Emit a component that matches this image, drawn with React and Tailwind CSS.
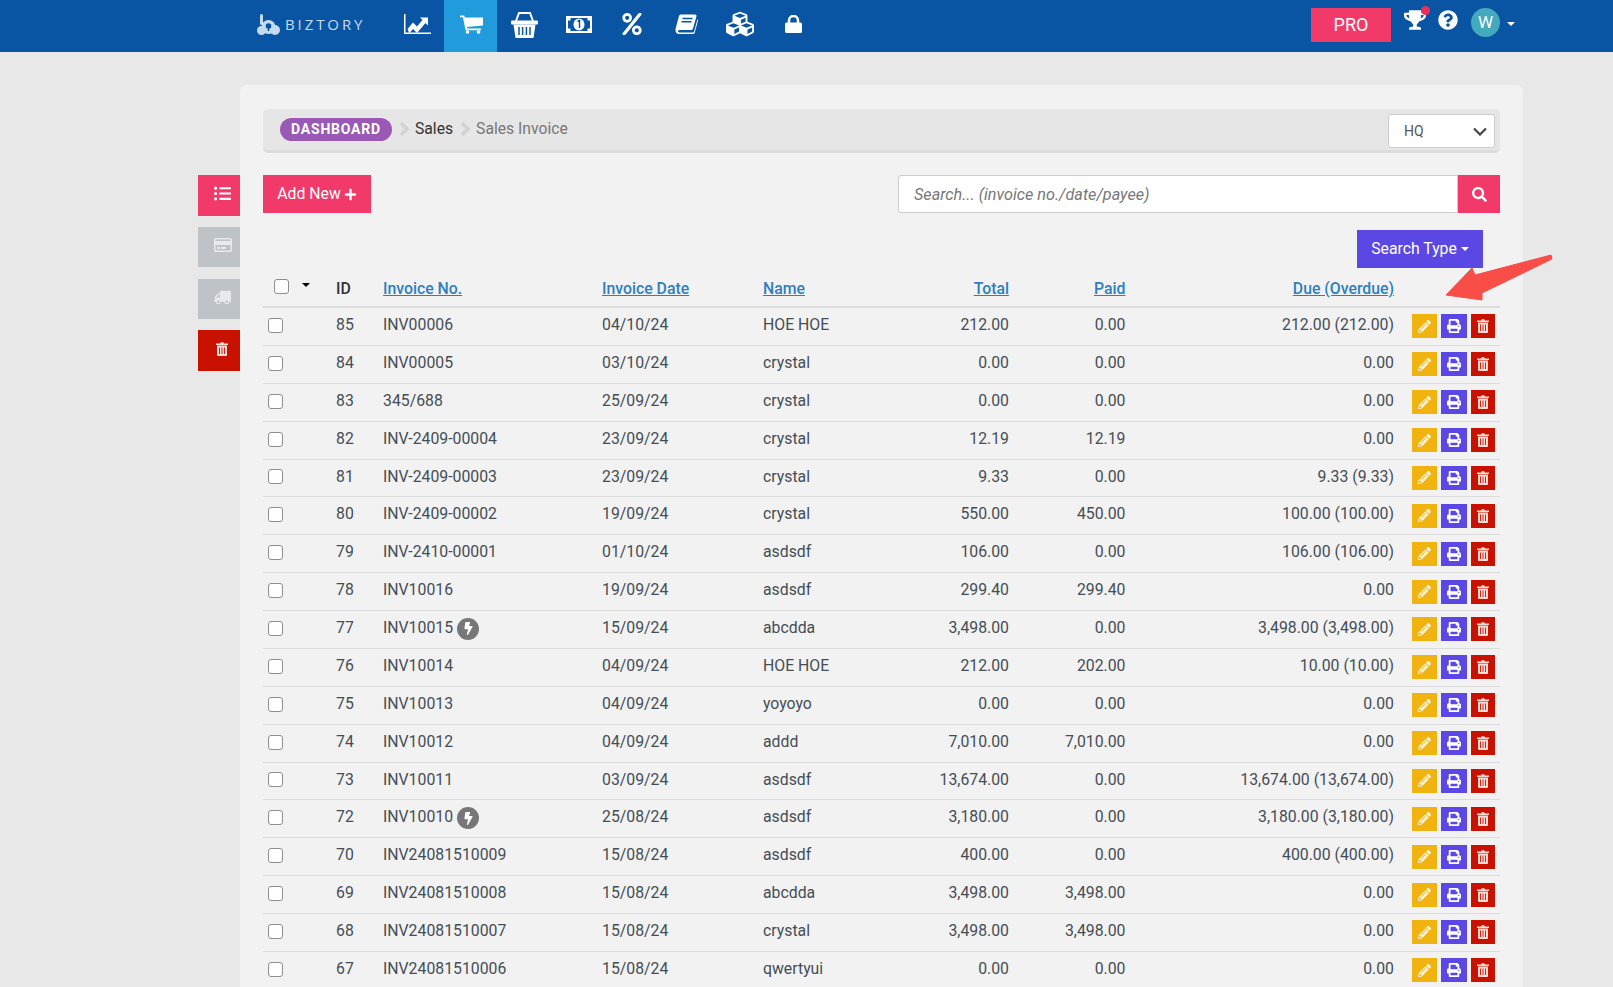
import React from 'react';
import {
  FaBolt, FaCubes, FaListUl, FaPencilAlt, FaPercent, FaPlus, FaPrint,
  FaQuestionCircle, FaRegCreditCard, FaSearch, FaTrophy, FaTruck,
} from 'react-icons/fa';

const ChartIcon = () => (
  <svg width="27" height="20" viewBox="0 0 27 20" fill="white">
    <path d="M.75 0v19.250H27" fill="none" stroke="white" strokeWidth="1.500" />
    <path d="M3.500 15l5.500-6.500 4 4 5.500-6.500-2.500-2.500h8v8l-2.500-2.500-8.500 10-4-4-3.700 4.300z" />
  </svg>
);

const CartIcon = () => (
  <svg width="23" height="19" viewBox="0 0 23 19" fill="white">
    <path d="M0 .5h4.200l.6 2H23v8L7 12l.3 1.500H21v1.700H5.500L3 2.200H0z" />
    <circle cx="7.500" cy="17" r="1.800" />
    <circle cx="18.500" cy="17" r="1.800" />
  </svg>
);

const BasketIcon = () => (
  <svg width="27" height="27" viewBox="0 0 27 27" fill="white">
    <path d="M5 10 8 2h11l3 8" fill="none" stroke="white" strokeWidth="2" />
    <rect y="9.500" width="27" height="4" rx="1" />
    <path d="M2.500 13.500h22L22.500 27h-18z" />
    <path d="M8 16v8M11.600 16v8M15.400 16v8M19 16v8" stroke="#0a55a3" strokeWidth="1.500" />
  </svg>
);

const MoneyIcon = () => (
  <svg width="26" height="17" viewBox="0 0 26 17" fill="white">
    <rect width="26" height="17" />
    <path d="M4.500 2h17v2.500H24v8h-2.500V15h-17v-2.500H2v-8h2.500z" fill="#0a55a3" />
    <ellipse cx="13" cy="8.500" rx="5.500" ry="6" />
    <path d="M11.500 5.500 13.500 4.500v7.500" fill="none" stroke="#0a55a3" strokeWidth="1.500" />
  </svg>
);

const BookIcon = () => (
  <svg width="23" height="20" viewBox="0 0 23 20" fill="white">
    <path d="M5.500.5h14.500q2 0 1.400 2L18 14.500q-.4 1.500-1.800 1.500H4.800q-2.300 0-1.900 1.500.3 1 2 1h12.600q1.300 0 1.700-1.200L22.500 5l.5 1.500-3.200 12q-.4 1.500-2 1.500H4.200Q1 20 .5 16.500q-.2-1.500.5-3.500L4 2Q4.400.5 5.500.5z" />
    <path d="M7.500 4.500h10M6.500 7.800h10" stroke="#0a55a3" strokeWidth="1.600" />
  </svg>
);

const LockIcon = () => (
  <svg width="17" height="18" viewBox="0 0 17 18" fill="white">
    <path d="M4 8V5.500a4.500 4.500 0 0 1 9 0V8" fill="none" stroke="white" strokeWidth="2.500" />
    <rect y="7.500" width="17" height="10.500" rx="1.500" />
  </svg>
);

const TrashIcon = () => (
  <svg width="12" height="14" viewBox="0 0 12 14" fill="#f9dcd6">
    <path d="M4 1.600 4.700.3h2.600L8 1.600h4V3H0V1.600z" />
    <path d="M1 3.600h10V13q0 1-1 1H2q-1 0-1-1z" />
    <path d="M3.500 5.500v6.500M6 5.500v6.500M8.500 5.500v6.500" stroke="#c91100" strokeWidth=".9" />
  </svg>
);

const navIcons = [
  { icon: <ChartIcon /> },
  { icon: <CartIcon />, active: true },
  { icon: <BasketIcon /> },
  { icon: <MoneyIcon /> },
  { icon: <FaPercent size={22} /> },
  { icon: <BookIcon /> },
  { icon: <FaCubes size={28} /> },
  { icon: <LockIcon /> },
];

const rows = [
  ['85', 'INV00006', '04/10/24', 'HOE HOE', '212.00', '0.00', '212.00 (212.00)'],
  ['84', 'INV00005', '03/10/24', 'crystal', '0.00', '0.00', '0.00'],
  ['83', '345/688', '25/09/24', 'crystal', '0.00', '0.00', '0.00'],
  ['82', 'INV-2409-00004', '23/09/24', 'crystal', '12.19', '12.19', '0.00'],
  ['81', 'INV-2409-00003', '23/09/24', 'crystal', '9.33', '0.00', '9.33 (9.33)'],
  ['80', 'INV-2409-00002', '19/09/24', 'crystal', '550.00', '450.00', '100.00 (100.00)'],
  ['79', 'INV-2410-00001', '01/10/24', 'asdsdf', '106.00', '0.00', '106.00 (106.00)'],
  ['78', 'INV10016', '19/09/24', 'asdsdf', '299.40', '299.40', '0.00'],
  ['77', 'INV10015', '15/09/24', 'abcdda', '3,498.00', '0.00', '3,498.00 (3,498.00)', true],
  ['76', 'INV10014', '04/09/24', 'HOE HOE', '212.00', '202.00', '10.00 (10.00)'],
  ['75', 'INV10013', '04/09/24', 'yoyoyo', '0.00', '0.00', '0.00'],
  ['74', 'INV10012', '04/09/24', 'addd', '7,010.00', '7,010.00', '0.00'],
  ['73', 'INV10011', '03/09/24', 'asdsdf', '13,674.00', '0.00', '13,674.00 (13,674.00)'],
  ['72', 'INV10010', '25/08/24', 'asdsdf', '3,180.00', '0.00', '3,180.00 (3,180.00)', true],
  ['70', 'INV24081510009', '15/08/24', 'asdsdf', '400.00', '0.00', '400.00 (400.00)'],
  ['69', 'INV24081510008', '15/08/24', 'abcdda', '3,498.00', '3,498.00', '0.00'],
  ['68', 'INV24081510007', '15/08/24', 'crystal', '3,498.00', '3,498.00', '0.00'],
  ['67', 'INV24081510006', '15/08/24', 'qwertyui', '0.00', '0.00', '0.00'],
];

const gridCols = 'grid grid-cols-[73px_47px_219px_161px_137px_109px_116.5px_268.5px_106px] items-center';

const Check = () => (
  <input type="checkbox" className="appearance-none block w-[15px] h-[15px] bg-white border border-[#8f8f8f] rounded-[3px]" />
);

const Logo = () => (
  <svg width="23" height="21" viewBox="0 0 23 21" fill="#c4dcee">
    <rect x="3" width="3" height="11" rx="1.500" />
    <circle cx="11.500" cy="13" r="7" />
    <circle cx="4.500" cy="16.500" r="4.500" />
    <circle cx="18" cy="16" r="5" />
    <circle cx="11.500" cy="12" r="2.800" fill="#0a55a3" />
    <rect x="10.700" y="12" width="1.600" height="5" fill="#0a55a3" />
  </svg>
);

const App = () => (
  <div className="h-[987px] overflow-hidden bg-[#e8e8e8] font-['Roboto',sans-serif] text-[15.8px] text-[#454d55]">
    <header className="h-[52px] bg-[#0a55a3] flex items-center relative">
      <div className="ml-[257px] w-[133px] flex items-center gap-[5px] pb-[3px]">
        <Logo />
        <span className="font-['Open_Sans',sans-serif] text-[15px] tracking-[2.900px] text-[#c4dcee]">BIZTORY</span>
      </div>
      <nav className="flex h-full">
        {navIcons.map(({ icon, active }, i) => (
          <div key={i} className={`w-[53.700px] h-full flex items-center justify-center text-white pl-[1.500px] pb-[4px] ${active ? 'bg-[#219bdb]' : ''}`}>
            {icon}
          </div>
        ))}
      </nav>
      <div className="ml-auto mr-[98px] flex items-start h-full">
        <div className="mt-[8px] w-[80px] h-[34px] bg-[#f13a6a] text-white text-[18px] flex items-center justify-center pb-[1px]">PRO</div>
        <div className="relative ml-[13px] mt-[9px] text-white">
          <FaTrophy size={22} />
          <span className="absolute -top-[3px] right-[-4px] w-[9px] h-[9px] rounded-full bg-[#e8305f]" />
        </div>
        <FaQuestionCircle size={20} className="ml-[12px] mt-[10px] text-white" />
        <div className="ml-[13px] mt-[8px] w-[29px] h-[29px] rounded-full bg-[#43a9bd] text-white text-[17px] flex items-center justify-center">W</div>
        <span className="ml-[7px] mt-[22px] w-0 h-0 border-x-[4px] border-x-transparent border-t-[4px] border-t-white" />
      </div>
    </header>

    <div className="flex pl-[198px]">
      <aside className="mt-[123px] w-[42px] flex flex-col text-[#e6eaec]">
        <div className="h-[41px] bg-[#f13a6a] text-white flex items-center justify-center pl-[7px] pb-[4px]"><FaListUl size={17} /></div>
        <div className="mt-[11px] h-[40px] bg-[#bec3c7] flex items-center justify-center pl-[7px] pb-[4px]"><FaRegCreditCard size={18} /></div>
        <div className="mt-[12px] h-[40px] bg-[#bec3c7] flex items-center justify-center pl-[7px] pb-[4px]"><FaTruck size={17} className="-scale-x-100" /></div>
        <div className="mt-[11px] h-[41px] bg-[#c91100] flex items-center justify-center pl-[6px] pb-[4px]"><TrashIcon /></div>
      </aside>

      <main className="relative mt-[33px] w-[1283px] bg-[#f2f2f2] rounded-t-[6px] pl-[23px] pr-[23px] pt-[24px]">
        <div className="h-[44px] bg-[#e6e6e6] border-b-[3px] border-[#dcdcdc] rounded-[5px] flex items-center pl-[17px] pr-[5px] text-[15.7px]">
          <span className="h-[23px] w-[112px] rounded-full bg-[#9b59b6] text-white text-[14px] font-bold tracking-[0.8px] flex items-center justify-center mb-[1px]">DASHBOARD</span>
          <Chevron />
          <span className="text-[#333] pb-[2px]">Sales</span>
          <Chevron />
          <span className="text-[#777] pb-[2px]">Sales Invoice</span>
          <div className="ml-auto mt-[3px] h-[34px] w-[107px] bg-white border border-[#ccc] rounded-[3px] flex items-center justify-between pl-[15px] pr-[7px] text-[14px] text-[#555]">
            HQ
            <svg width="14" height="9" viewBox="0 0 14 9" fill="none" stroke="#444" strokeWidth="2.200"><path d="M1 1.500l6 6 6-6" /></svg>
          </div>
        </div>

        <div className="mt-[22px] flex justify-between">
          <button className="w-[108px] h-[38px] bg-[#f13a6a] text-white flex items-center justify-center gap-[3px]">
            Add New <FaPlus size={13} />
          </button>
          <div className="flex w-[602px] h-[38px]">
            <div className="flex-1 bg-white border border-[#ccc] rounded-l-[3px] pl-[15px] pt-[2px] flex items-center italic text-[16.2px] text-[#777]">
              Search... (invoice no./date/payee)
            </div>
            <div className="w-[42px] bg-[#f13a6a] text-white flex items-center justify-center"><FaSearch size={15} /></div>
          </div>
        </div>

        <div className="mt-[17px] flex justify-end pr-[17px]">
          <button className="w-[126px] h-[38px] bg-[#5b48e4] text-white flex items-center justify-center gap-[4px]">
            Search Type
            <span className="w-0 h-0 border-x-[4px] border-x-transparent border-t-[4px] border-t-white" />
          </button>
        </div>

        <div className={`${gridCols} h-[40px] pt-[4px] border-b-[2px] border-[#dcdcdc] font-medium`}>
          <div className="flex items-center pl-[11px] pb-[6px]">
            <Check />
            <span className="ml-[13px] mb-[3px] w-0 h-0 border-x-[4px] border-x-transparent border-t-[4px] border-t-black" />
          </div>
          <div className="text-[#333]">ID</div>
          <HeadLink>Invoice No.</HeadLink>
          <HeadLink>Invoice Date</HeadLink>
          <HeadLink>Name</HeadLink>
          <HeadLink right>Total</HeadLink>
          <HeadLink right>Paid</HeadLink>
          <HeadLink right>Due (Overdue)</HeadLink>
          <div />
        </div>

        {rows.map((r) => (
          <div key={r[0]} className={`${gridCols} h-[37.880px] pb-[3px] border-b border-[#dcdcdc]`}>
            <div className="pl-[5px] mt-[1px]"><Check /></div>
            <div>{r[0]}</div>
            <div className="flex items-center gap-[4px]">
              {r[1]}
              {r[7] && (
                <span className="w-[22px] h-[22px] mt-[2px] rounded-full bg-[#777] text-white flex items-center justify-center">
                  <FaBolt size={13} />
                </span>
              )}
            </div>
            <div>{r[2]}</div>
            <div>{r[3]}</div>
            <div className="text-right">{r[4]}</div>
            <div className="text-right">{r[5]}</div>
            <div className="text-right">{r[6]}</div>
            <div className="flex pl-[18px] gap-[4px] mt-[3px]">
              <span className="w-[25px] h-[24px] bg-[#f0b30f] text-[#fbf0d0] flex items-center justify-center"><FaPencilAlt size={13} /></span>
              <span className="w-[26px] h-[24px] bg-[#5b48e4] text-white flex items-center justify-center"><FaPrint size={14} /></span>
              <span className="w-[24px] h-[24px] bg-[#c91100] flex items-center justify-center"><TrashIcon /></span>
            </div>
          </div>
        ))}

        <svg className="absolute left-[1204px] top-[168px]" width="112" height="50" viewBox="0 0 112 50" fill="#f94d47" stroke="#f94d47" strokeLinejoin="round">
          <path d="M2 42 28 15l3 7 76-20 1 4-70 34v7z" />
        </svg>
      </main>
    </div>
  </div>
);

function Chevron() {
  return (
    <svg className="mx-[6.500px] mb-[2px]" width="10" height="14" viewBox="0 0 10 14" fill="none" stroke="#d2d2d2" strokeWidth="3.500">
      <path d="M2 1l6 6-6 6" />
    </svg>
  );
}

function HeadLink({ children, right }) {
  return (
    <div className={right ? 'text-right' : ''}>
      <a className="text-[#2d7fbf] underline">{children}</a>
    </div>
  );
}

export default App;
